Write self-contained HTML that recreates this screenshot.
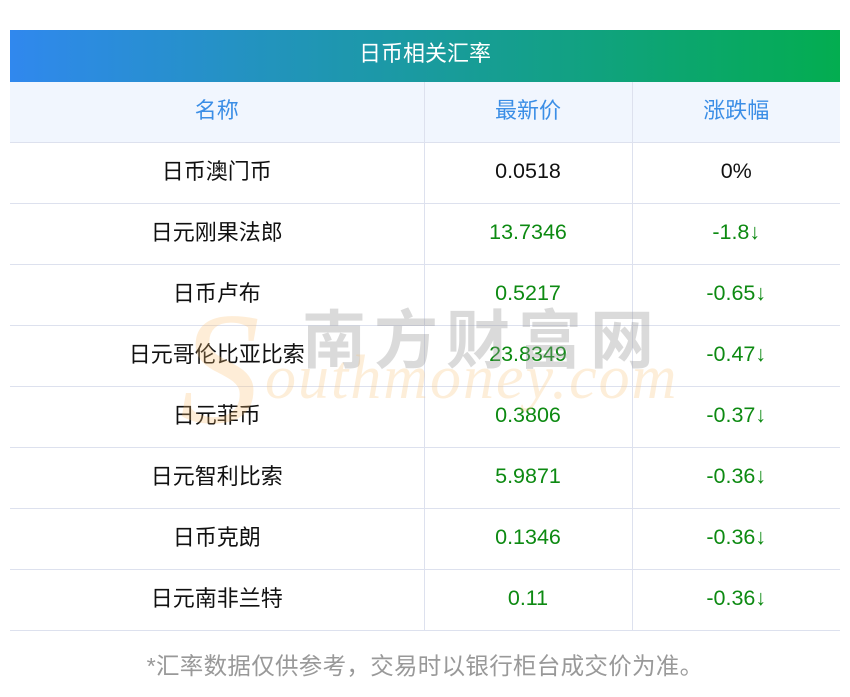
<!DOCTYPE html>
<html><head><meta charset="utf-8"><style>
*{margin:0;padding:0;box-sizing:border-box}
body{width:850px;height:697px;background:#fff;font-family:"Liberation Sans","Noto Sans CJK SC",sans-serif;position:relative;overflow:hidden}
.title{position:absolute;left:10px;top:30px;width:830px;height:52px;background:linear-gradient(90deg,#3088ee,#03ad50);color:#fff;font-size:22px;line-height:48px;text-align:center}
table{position:absolute;left:10px;top:82px;width:830px;border-collapse:collapse;font-size:21.5px}
td{height:61px;text-align:center;border:1px solid #dde1ee;color:#111;padding:0 0 2px}
td:first-child{font-size:22px;padding-bottom:5px}
tr:first-child td{border-top:none;background:#f1f6fe;color:#3b8ee6;height:60px;font-size:22px;padding-bottom:5px}
td:first-child{border-left:none;width:414px}
td:nth-child(2){width:208px}
td:last-child{border-right:none}
.g{color:#0d8a12}
.foot{position:absolute;left:0;width:850px;top:647px;text-align:center;color:#999;font-size:23.5px;letter-spacing:0.3px}
.wm1{position:absolute;left:302px;top:290px;font-size:64px;color:rgba(150,150,150,.35);letter-spacing:8px;font-weight:bold;font-family:"Noto Sans CJK SC",sans-serif}
.wm2{position:absolute;left:265px;top:343px;font-size:62px;font-style:italic;color:rgba(250,200,130,.3);font-family:"Liberation Serif",serif;letter-spacing:2px}
.wmS{position:absolute;left:180px;top:288px;font-size:160px;font-style:italic;color:rgba(250,190,110,.28);font-family:"Liberation Serif",serif;line-height:1}
</style></head><body>
<div class="title">日币相关汇率</div>
<table>
<tr><td>名称</td><td>最新价</td><td>涨跌幅</td></tr>
<tr><td>日币澳门币</td><td>0.0518</td><td>0%</td></tr>
<tr><td>日元刚果法郎</td><td class="g">13.7346</td><td class="g">-1.8↓</td></tr>
<tr><td>日币卢布</td><td class="g">0.5217</td><td class="g">-0.65↓</td></tr>
<tr><td>日元哥伦比亚比索</td><td class="g">23.8349</td><td class="g">-0.47↓</td></tr>
<tr><td>日元菲币</td><td class="g">0.3806</td><td class="g">-0.37↓</td></tr>
<tr><td>日元智利比索</td><td class="g">5.9871</td><td class="g">-0.36↓</td></tr>
<tr><td>日币克朗</td><td class="g">0.1346</td><td class="g">-0.36↓</td></tr>
<tr><td>日元南非兰特</td><td class="g">0.11</td><td class="g">-0.36↓</td></tr>
</table>
<div class="wmS">S</div>
<div class="wm1">南方财富网</div>
<div class="wm2">outhmoney.com</div>
<div class="foot">*汇率数据仅供参考，交易时以银行柜台成交价为准。</div>
</body></html>
